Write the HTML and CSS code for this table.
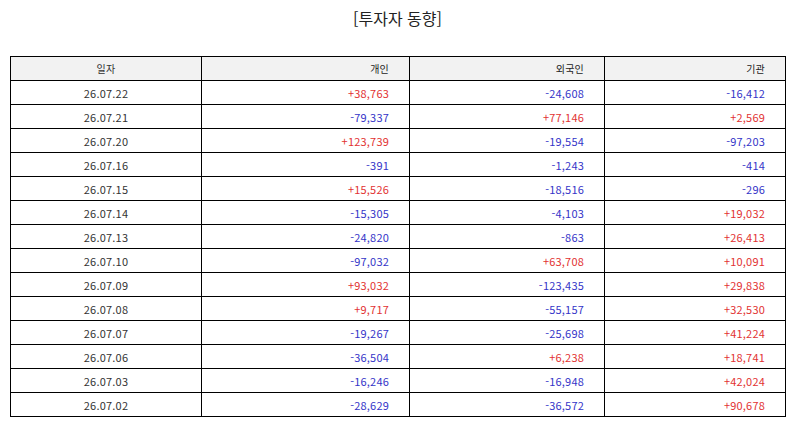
FILE: index.html
```html
<!DOCTYPE html>
<html lang="ko">
<head>
<meta charset="utf-8">
<link rel="stylesheet" href="styles.css">
</head>
<body>
<div class="page">
  <h1 class="title">[투자자 동향]</h1>
  <table class="grid">
    <colgroup>
      <col class="c1"><col class="c2"><col class="c3"><col class="c4">
    </colgroup>
    <thead>
      <tr><th class="date">일자</th><th>개인</th><th>외국인</th><th>기관</th></tr>
    </thead>
    <tbody>
      <tr><td class="date">26.07.22</td><td class="up">+38,763</td><td class="dn">-24,608</td><td class="dn">-16,412</td></tr>
      <tr><td class="date">26.07.21</td><td class="dn">-79,337</td><td class="up">+77,146</td><td class="up">+2,569</td></tr>
      <tr><td class="date">26.07.20</td><td class="up">+123,739</td><td class="dn">-19,554</td><td class="dn">-97,203</td></tr>
      <tr><td class="date">26.07.16</td><td class="dn">-391</td><td class="dn">-1,243</td><td class="dn">-414</td></tr>
      <tr><td class="date">26.07.15</td><td class="up">+15,526</td><td class="dn">-18,516</td><td class="dn">-296</td></tr>
      <tr><td class="date">26.07.14</td><td class="dn">-15,305</td><td class="dn">-4,103</td><td class="up">+19,032</td></tr>
      <tr><td class="date">26.07.13</td><td class="dn">-24,820</td><td class="dn">-863</td><td class="up">+26,413</td></tr>
      <tr><td class="date">26.07.10</td><td class="dn">-97,032</td><td class="up">+63,708</td><td class="up">+10,091</td></tr>
      <tr><td class="date">26.07.09</td><td class="up">+93,032</td><td class="dn">-123,435</td><td class="up">+29,838</td></tr>
      <tr><td class="date">26.07.08</td><td class="up">+9,717</td><td class="dn">-55,157</td><td class="up">+32,530</td></tr>
      <tr><td class="date">26.07.07</td><td class="dn">-19,267</td><td class="dn">-25,698</td><td class="up">+41,224</td></tr>
      <tr><td class="date">26.07.06</td><td class="dn">-36,504</td><td class="up">+6,238</td><td class="up">+18,741</td></tr>
      <tr><td class="date">26.07.03</td><td class="dn">-16,246</td><td class="dn">-16,948</td><td class="up">+42,024</td></tr>
      <tr><td class="date">26.07.02</td><td class="dn">-28,629</td><td class="dn">-36,572</td><td class="up">+90,678</td></tr>
    </tbody>
  </table>
</div>
</body>
</html>
```
FILE: styles.css
```css
html, body {
  margin: 0;
  padding: 0;
  background: #ffffff;
}
.page {
  font-family: "Noto Sans CJK KR", "Noto Sans", sans-serif;
  color: #333333;
  padding: 0 9px 0 10px;
}
.title {
  margin: 0;
  padding-top: 6px;
  height: 56px;
  box-sizing: border-box;
  text-align: center;
  font-size: 16px;
  font-weight: normal;
  line-height: 24px;
  color: #222222;
}
.grid {
  width: 775px;
  border-collapse: collapse;
  table-layout: fixed;
  font-size: 11px;
}
.c1 { width: 191px; }
.c2 { width: 208px; }
.c3 { width: 195px; }
.c4 { width: 181px; }
.grid th, .grid td {
  border: 1px solid #000000;
  height: 23px;
  padding: 0 20px 0 4px;
  text-align: right;
  font-weight: normal;
  line-height: 14px;
  letter-spacing: 0.2px;
}
.grid th {
  background: #f2f2f2;
  color: #222222;
  font-size: 10px;
}
.grid .date {
  text-align: center;
  padding: 0;
  color: #333333;
}
.up { color: #e23232; }
.dn { color: #3434c8; }
```
